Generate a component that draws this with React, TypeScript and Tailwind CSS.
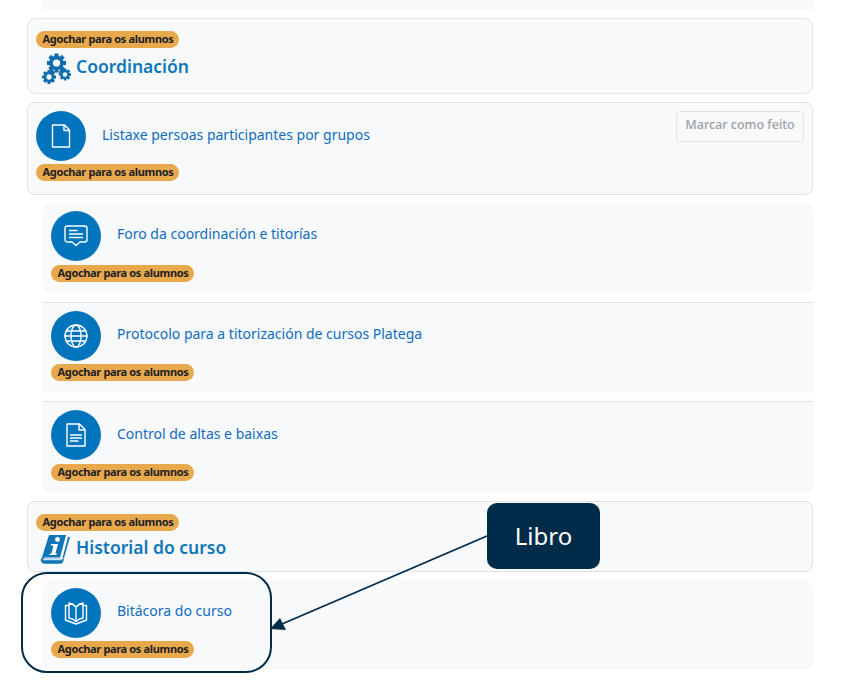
const sans = 'font-["Noto_Sans",sans-serif]'

function Badge() {
  return (
    <span className='inline-block h-[17px] w-[143px] rounded-full bg-[#e8a84c] pl-[1px] text-center text-[11px] font-bold leading-[16px] tracking-[-0.35px] text-[#1d2125]'>
      Agochar para os alumnos
    </span>
  )
}

function Gear({ cx, cy, r }: { cx: number; cy: number; r: number }) {
  const teeth = [0, 45, 90, 135]
  return (
    <g>
      {teeth.map((a) => (
        <rect
          key={a}
          x={cx - r * 0.22}
          y={cy - r}
          width={r * 0.44}
          height={r * 2}
          fill="#0f6cae"
          transform={`rotate(${a} ${cx} ${cy})`}
        />
      ))}
      <circle cx={cx} cy={cy} r={r * 0.76} fill="#0f6cae" />
      <circle cx={cx} cy={cy} r={r * 0.38} fill="#f8f9fa" />
    </g>
  )
}

function GearsIcon() {
  return (
    <svg width="30" height="32" viewBox="0 0 30 32" className="shrink-0">
      <path d="M10 15 L7 20 L13 20Z M19 15 L23 17 L16 21Z" fill="#0f6cae" />
      <Gear cx={14.5} cy={10} r={9.5} />
      <Gear cx={7} cy={24} r={7} />
      <Gear cx={23} cy={21.5} r={6} />
    </svg>
  )
}

function InfoBookIcon() {
  return (
    <svg width="32" height="30" viewBox="0 0 32 30" className="shrink-0">
      <path d="M9 1 H26 L20 23.5 H5 Q2 23.5 1.5 25 L3 20Z" fill="#0f76b8" />
      <path d="M1.5 25 Q1.5 29 5 29 H20 Q22 29 22.5 27 L23 25.5 H5 Q3 25.5 3 24" fill="#0f76b8" stroke="#0f76b8" strokeWidth="1.6" />
      <path d="M2.8 25.7 H22" stroke="#f8f9fa" strokeWidth="1" />
      <path d="M28 3 H30 L24 24 H22.5Z" fill="#0f76b8" />
      <circle cx="17.5" cy="5.5" r="2.4" fill="#fff" />
      <path d="M11 10 H18 L15.4 19.5 H17 L16.4 21 H9.5 L10 19.5 H11.5 L13.4 11.6 H10.7Z" fill="#fff" />
    </svg>
  )
}

function ModuleIcon({ children }: { children: React.ReactNode }) {
  return (
    <div className="flex h-[50px] w-[50px] shrink-0 items-center justify-center rounded-full bg-[#0075bd]">
      <svg width="24" height="24" viewBox="0 0 24 24" fill="none" stroke="#fff" strokeWidth="1.4" strokeLinejoin="round" strokeLinecap="round">
        {children}
      </svg>
    </div>
  )
}

const pageIcon = <path d="M3.5 1 H15.5 L20.5 6 V23 H3.5Z M15 1.5 V6.5 H20" />
const forumIcon = (
  <>
    <path d="M3.5 2 H20.5 Q23 2 23 4.5 V15.5 Q23 18 20.5 18 H16 L12 21.5 L8 18 H3.5 Q1 18 1 15.5 V4.5 Q1 2 3.5 2Z" />
    <path d="M5.5 6.5 H13 M5.5 10 H18.5 M5.5 13.5 H18.5" />
  </>
)
const globeIcon = (
  <>
    <circle cx="12" cy="12" r="11" />
    <ellipse cx="12" cy="12" rx="5" ry="11" />
    <path d="M2.5 7 H21.5 M2.5 17 H21.5 M1 12 H23" />
  </>
)
const docIcon = (
  <>
    <path d="M3 1 H15.5 L21 6.5 V23 H3Z M15 1.5 V7 H20.5" />
    <path d="M6.5 12 H17.5 M6.5 15 H17.5 M6.5 18 H14" />
  </>
)
const bookIcon = (
  <>
    <path d="M12 6 Q9 2.5 5 2 V17 Q9 17.5 12 20.5 Q15 17.5 19 17 V2 Q15 2.5 12 6 V20.5" />
    <path d="M5 4.5 H1.5 V19 L12 23 L22.5 19 V4.5 H19" />
  </>
)

function Activity({
  icon,
  title,
  className = '',
  titleClass = '-mt-[5px]',
  badgeClass = 'mt-[4px]',
}: {
  icon: React.ReactNode
  title: string
  className?: string
  titleClass?: string
  badgeClass?: string
}) {
  return (
    <div className={`rounded-lg bg-[#f8f9fa] px-2 pt-2 ${className}`}>
      <div className="flex items-center gap-4">
        {icon}
        <a className={`text-sm text-[#0f6cbf] ${titleClass}`}>{title}</a>
      </div>
      <div className={`flex ${badgeClass}`}>
        <Badge />
      </div>
    </div>
  )
}

function SectionHeader({ icon, title, h }: { icon: React.ReactNode; title: string; h: string }) {
  return (
    <div className={`ml-[27px] mr-[37px] mt-2 rounded-lg border border-[#dee2e6] bg-[#f8f9fa] px-2 pt-[12px] ${h}`}>
      <div className="flex">
        <Badge />
      </div>
      <div className="flex items-center gap-[4px]">
        {icon}
        <h3 className="text-[17.5px] font-semibold leading-none text-[#0f76b8]">{title}</h3>
      </div>
    </div>
  )
}

export default function App() {
  return (
    <div className={`relative h-[682px] w-[850px] overflow-hidden bg-white ${sans}`}>
      <div className="ml-[43px] mr-[37px] h-[10px] bg-[#f8f9fa]" />

      <SectionHeader
        h="h-[76px]"
        title="Coordinación"
        icon={
          <div className="ml-[6px] mt-[5px]">
            <GearsIcon />
          </div>
        }
      />

      <div className="ml-[27px] mr-[37px] mt-2 flex h-[93px] items-start justify-between rounded-lg border border-[#dee2e6] bg-[#f8f9fa] px-2 pt-2">
        <div>
          <div className="flex items-center gap-4">
            <ModuleIcon>{pageIcon}</ModuleIcon>
            <a className="-mt-[3px] text-sm text-[#0f6cbf]">Listaxe persoas participantes por grupos</a>
          </div>
          <div className="mt-[3px] flex">
            <Badge />
          </div>
        </div>
        <button className="h-[31px] w-[128px] whitespace-nowrap rounded border border-[#dee2e6] pb-[2px] text-center text-[12.5px] font-medium text-[#9ca0a5]">
          Marcar como feito
        </button>
      </div>

      <div className="ml-[43px] mr-[37px] mt-2">
        <Activity icon={<ModuleIcon>{forumIcon}</ModuleIcon>} title="Foro da coordinación e titorías" className="h-[90px]" />
        <div className="mt-[9px] border-t border-[#dee2e6]" />
        <Activity
          icon={<ModuleIcon>{globeIcon}</ModuleIcon>}
          title="Protocolo para a titorización de cursos Platega"
          className="h-[90px] rounded-none"
          badgeClass="mt-[3px]"
        />
        <div className="mt-[8px] border-t border-[#dee2e6]" />
        <Activity
          icon={<ModuleIcon>{docIcon}</ModuleIcon>}
          title="Control de altas e baixas"
          className="h-[90px] rounded-none"
          titleClass="-mt-[3px]"
        />
      </div>

      <SectionHeader
        h="mt-[9px] h-[71px]"
        title="Historial do curso"
        icon={
          <div className="ml-[4px] mt-[3px]">
            <InfoBookIcon />
          </div>
        }
      />

      <div className="ml-[43px] mr-[37px] mt-2">
        <Activity
          icon={<ModuleIcon>{bookIcon}</ModuleIcon>}
          title="Bitácora do curso"
          className="h-[90px]"
          badgeClass="mt-[3px]"
        />
      </div>

      {/* callout drawn over the screenshot */}
      <div className="absolute left-[21px] top-[572px] h-[101px] w-[251px] rounded-[26px] border-2 border-[#002b49]" />
      <div className="absolute left-[487px] top-[503px] flex h-[66px] w-[113px] items-center justify-center rounded-[10px] bg-[#002b49] text-[24px] text-white">
        Libro
      </div>
      <svg className="absolute left-[260px] top-[525px]" width="240" height="115" viewBox="0 0 240 115">
        <path d="M227 11 L22 99" stroke="#002b49" strokeWidth="1.8" fill="none" />
        <path d="M10 104 L20 93 L26 105Z" fill="#002b49" />
      </svg>
    </div>
  )
}
